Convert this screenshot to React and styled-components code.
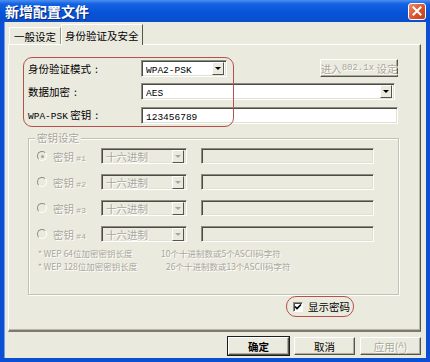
import React from "react";
import styled, { createGlobalStyle } from "styled-components";

const colors = {
  face: "#ebeadf",
  light: "#ffffff",
  shadow: "#9a988b",
  dark: "#55544d",
  disabled: "#a9a79a",
  mark: "#b5514a",
  blue: "#0b50d2",
};

const cjk = `"Noto Sans CJK SC", "Noto Sans", sans-serif`;
const mono = `"Liberation Mono", "DejaVu Sans Mono", monospace`;

const GlobalStyle = createGlobalStyle`
  html, body { margin: 0; padding: 0; background: #fff; }
  body { font-family: ${cjk}; font-size: 10.5px; color: #000; }
  * { box-sizing: border-box; }
`;

const Window = styled.div`
  width: 430px;
  height: 362px;
  display: flex;
  flex-direction: column;
  background: ${colors.blue};
`;

const TitleBar = styled.div`
  height: 22px;
  flex-shrink: 0;
  display: flex;
  align-items: center;
  justify-content: space-between;
  padding: 0 4px 0 5px;
  background: linear-gradient(#4a8ff2 0%, #1462e2 18%, #0754d9 55%, #0a4fcb 100%);
`;

const Title = styled.span`
  font-size: 14px;
  font-weight: bold;
  color: #fff;
  text-shadow: 1px 1px 0 #0b2a78;
`;

const CloseButton = styled.div`
  width: 18px;
  height: 17px;
  border: 1px solid #fff;
  border-radius: 3px;
  background: linear-gradient(135deg, #ec8d6c 0%, #d9532c 55%, #c23e1b 100%);
  display: flex;
  align-items: center;
  justify-content: center;
`;

const Frame = styled.div`
  flex: 1;
  display: flex;
  padding: 0 4px 4px 4px;
`;

const Body = styled.div`
  flex: 1;
  background: ${colors.face};
  display: flex;
  flex-direction: column;
  padding: 2px 5px 3px 3px;
  border-left: 1px solid #6f9cf0;
`;

const TabStrip = styled.div`
  height: 20px;
  display: flex;
  align-items: flex-end;
  padding-left: 1px;
  position: relative;
  z-index: 1;
`;

const Tab = styled.div`
  height: ${(p) => (p.active ? 21 : 17)}px;
  margin-bottom: ${(p) => (p.active ? -1 : 0)}px;
  padding: 0 ${(p) => (p.active ? 3 : 4)}px;
  display: flex;
  align-items: center;
  background: ${colors.face};
  border-top: 1px solid ${colors.light};
  border-left: 1px solid ${colors.light};
  border-right: 1px solid ${(p) => (p.active ? colors.dark : colors.shadow)};
  white-space: nowrap;
`;

const Panel = styled.div`
  height: 288px;
  border-top: 1px solid ${colors.light};
  border-left: 1px solid ${colors.light};
  border-right: 1px solid ${colors.dark};
  border-bottom: 2px solid #7d7b70;
  box-shadow: inset -1px -1px 0 #b8b6a8;
  padding: 14px 0 0 19px;
  display: flex;
  flex-direction: column;
`;

const Form = styled.div`
  position: relative;
  display: grid;
  grid-template-columns: 113px 257px;
  row-gap: 6px;
  align-items: center;
`;

const Highlight = styled.div`
  position: absolute;
  left: -5px;
  top: -2px;
  width: 211px;
  height: 70px;
  border: 1.5px solid ${colors.mark};
  border-radius: 9px;
  pointer-events: none;
`;

const Label = styled.span`
  white-space: nowrap;
  line-height: 17px;
`;

const Colon = styled.span`
  margin-left: 4px;
`;

const Latin = styled.span`
  font-family: ${mono};
  font-size: ${(p) => p.size || 9.5}px;
`;

const ControlRow = styled.div`
  display: flex;
  justify-content: space-between;
  align-items: center;
`;

const Sunken = styled.div`
  width: ${(p) => p.width}px;
  height: ${(p) => p.height || 17}px;
  background: ${(p) => (p.disabled ? colors.face : "#fff")};
  border-top: 1px solid #8e8c80;
  border-left: 1px solid #8e8c80;
  border-right: 1px solid ${colors.light};
  border-bottom: 1px solid ${colors.light};
  box-shadow: inset 1px 1px 0 #4b4a44, inset -1px -1px 0 #e2e0d3;
  display: flex;
  align-items: center;
  padding: 0 2px 0 4px;
  color: ${(p) => (p.disabled ? colors.disabled : "#000")};
  text-shadow: ${(p) => (p.disabled ? "1px 1px 0 #fff" : "none")};
`;

const Value = styled.span`
  flex: 1;
  white-space: nowrap;
  overflow: hidden;
`;

const ArrowButton = styled.div`
  width: 12px;
  height: 13px;
  background: ${colors.face};
  border-top: 1px solid ${colors.light};
  border-left: 1px solid ${colors.light};
  border-right: 1px solid ${colors.dark};
  border-bottom: 1px solid ${colors.dark};
  display: flex;
  align-items: center;
  justify-content: center;
  &::after {
    content: "";
    border-left: 3px solid transparent;
    border-right: 3px solid transparent;
    border-top: 3px solid ${(p) => (p.disabled ? colors.disabled : "#000")};
  }
`;

const Button = styled.div`
  width: ${(p) => p.width || 61}px;
  height: ${(p) => p.height || 18}px;
  display: flex;
  align-items: center;
  justify-content: center;
  white-space: nowrap;
  background: ${colors.face};
  border-top: 1px solid ${colors.light};
  border-left: 1px solid ${colors.light};
  border-right: 1px solid ${colors.dark};
  border-bottom: 1px solid ${colors.dark};
  box-shadow: inset -1px -1px 0 #aeac9f${(p) => (p.primary ? ", 0 0 0 1px #1d1d1b" : "")};
  color: ${(p) => (p.disabled ? colors.disabled : "#000")};
  font-weight: ${(p) => (p.primary ? "bold" : "normal")};
  text-shadow: ${(p) => (p.disabled ? "1px 1px 0 #fff" : "none")};
`;

const Group = styled.div`
  position: relative;
  width: 371px;
  height: 157px;
  margin-top: 13px;
  border: 1px solid #c3c1b3;
  box-shadow: inset 1px 1px 0 #fff, 1px 1px 0 #fff;
  padding: 9px 0 0 8px;
  display: flex;
  flex-direction: column;
`;

const Legend = styled.span`
  position: absolute;
  left: 6px;
  top: -9px;
  padding: 0 2px;
  background: ${colors.face};
  color: ${colors.disabled};
  text-shadow: 1px 1px 0 #fff;
  line-height: 16px;
`;

const KeyList = styled.div`
  display: flex;
  flex-direction: column;
  gap: 10px;
`;

const KeyRow = styled.div`
  display: flex;
  align-items: center;
  height: 16px;
`;

const Radio = styled.div`
  width: 10px;
  height: 10px;
  border-radius: 50%;
  border: 1px solid;
  border-color: #8e8c80 #fff #fff #8e8c80;
  display: flex;
  align-items: center;
  justify-content: center;
  margin-right: 6px;
  &::after {
    content: "";
    width: 3px;
    height: 3px;
    border-radius: 50%;
    background: ${(p) => (p.checked ? colors.disabled : "transparent")};
  }
`;

const KeyLabel = styled.span`
  width: 48px;
  color: ${colors.disabled};
  text-shadow: 1px 1px 0 #fff;
  white-space: nowrap;
`;

const Gap = styled.div`
  width: ${(p) => p.size}px;
  flex-shrink: 0;
`;

const Notes = styled.div`
  margin-top: 5px;
  padding-left: 1px;
  font-size: 8.5px;
  line-height: 12.5px;
  color: ${colors.disabled};
  text-shadow: 1px 1px 0 #fff;
`;

const NoteLine = styled.div`
  display: flex;
  white-space: nowrap;
`;

const NoteLead = styled.span`
  width: ${(p) => p.width}px;
`;

const CheckRow = styled.div`
  display: flex;
  justify-content: flex-end;
  width: 371px;
  padding-right: 45px;
  margin-top: 1px;
`;

const CheckMark = styled.label`
  display: flex;
  align-items: center;
  gap: 5px;
  height: 21px;
  padding: 0 3px 0 6px;
  border: 1.5px solid ${colors.mark};
  border-radius: 10px;
  white-space: nowrap;
`;

const Box = styled.div`
  width: 10px;
  height: 10px;
  background: #fff;
  border-top: 1px solid #8e8c80;
  border-left: 1px solid #8e8c80;
  border-right: 1px solid #fff;
  border-bottom: 1px solid #fff;
  box-shadow: inset 1px 1px 0 #4b4a44;
  display: flex;
  align-items: center;
  justify-content: center;
`;

const ButtonRow = styled.div`
  display: flex;
  justify-content: flex-end;
  gap: 5px;
  margin-top: 5px;
`;

const keys = ["1", "2", "3", "4"];

export default function App() {
  return (
    <>
      <GlobalStyle />
      <Window>
        <TitleBar>
          <Title>新增配置文件</Title>
          <CloseButton>
            <svg width="10" height="10" viewBox="0 0 10 10">
              <path d="M1.5 1.5 L8.5 8.5 M8.5 1.5 L1.5 8.5" stroke="#fff" strokeWidth="2" strokeLinecap="square" />
            </svg>
          </CloseButton>
        </TitleBar>
        <Frame>
          <Body>
            <TabStrip>
              <Tab>一般设定</Tab>
              <Tab active>身份验证及安全</Tab>
            </TabStrip>
            <Panel>
              <Form>
                <Highlight />
                <Label>身份验证模式<Colon>:</Colon></Label>
                <ControlRow>
                  <Sunken width={86}>
                    <Value><Latin>WPA2-PSK</Latin></Value>
                    <ArrowButton />
                  </Sunken>
                  <Button width={78} disabled>
                    进入<Latin size={9}>802.1x</Latin>&nbsp;设定
                  </Button>
                </ControlRow>
                <Label>数据加密<Colon>:</Colon></Label>
                <Sunken width={254}>
                  <Value><Latin>AES</Latin></Value>
                  <ArrowButton />
                </Sunken>
                <Label><Latin>WPA-PSK</Latin> 密钥<Colon>:</Colon></Label>
                <Sunken width={257}>
                  <Value><Latin>123456789</Latin></Value>
                </Sunken>
              </Form>

              <Group>
                <Legend>密钥设定</Legend>
                <KeyList>
                  {keys.map((k) => (
                    <KeyRow key={k}>
                      <Radio checked={k === "1"} />
                      <KeyLabel>
                        密钥 <Latin size={8}>#{k}</Latin>
                      </KeyLabel>
                      <Sunken width={86} height={16} disabled>
                        <Value>十六进制</Value>
                        <ArrowButton disabled />
                      </Sunken>
                      <Gap size={14} />
                      <Sunken width={173} height={16} disabled />
                    </KeyRow>
                  ))}
                </KeyList>
                <Notes>
                  <NoteLine>
                    <NoteLead width={123}>* WEP 64位加密密钥长度</NoteLead>
                    <span>10个十进制数或5个ASCII码字符</span>
                  </NoteLine>
                  <NoteLine>
                    <NoteLead width={128}>* WEP 128位加密密钥长度</NoteLead>
                    <span>26个十进制数或13个ASCII码字符</span>
                  </NoteLine>
                </Notes>
              </Group>

              <CheckRow>
                <CheckMark>
                  <Box>
                    <svg width="8" height="8" viewBox="0 0 8 8">
                      <path d="M1 3.5 L3 5.5 L7 1.5" stroke="#000" strokeWidth="1.6" fill="none" />
                    </svg>
                  </Box>
                  显示密码
                </CheckMark>
              </CheckRow>
            </Panel>
            <ButtonRow>
              <Button primary>确定</Button>
              <Button>取消</Button>
              <Button disabled>
                应用(<Latin size={9}>A</Latin>)
              </Button>
            </ButtonRow>
          </Body>
        </Frame>
      </Window>
    </>
  );
}
